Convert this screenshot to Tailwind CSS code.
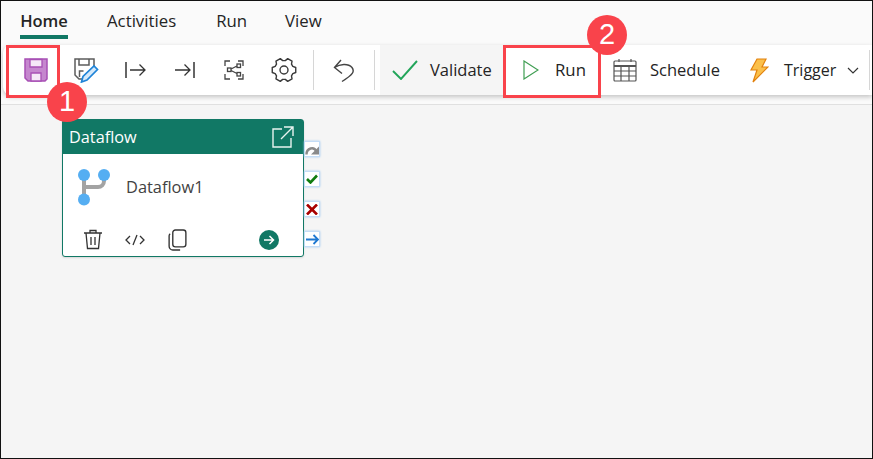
<!DOCTYPE html>
<html>
<head>
<meta charset="utf-8">
<script src="https://cdn.jsdelivr.net/npm/@tailwindcss/browser@4"></script>
</head>
<body class="m-0">
<div class="relative w-[873px] h-[459px] overflow-hidden bg-[#f5f5f5] font-['Open_Sans','Noto_Sans',sans-serif] text-[#242424] border border-[#111111]">
  <!-- top area -->
  <div class="h-[103px] bg-[#fafafa] border-b border-[#e0e0e0] box-content">
    <nav class="flex h-[44px] pl-[19px] text-[16.8px] leading-[22px]">
      <a class="relative w-[48px] pt-[9px] text-[16.5px] font-semibold text-[#242424] text-center whitespace-nowrap">Home<span class="absolute left-0 right-0 top-[34px] h-[4px] bg-[#117865]"></span></a>
      <a class="ml-[39px] pt-[9px]">Activities</a>
      <a class="ml-[40px] pt-[9px]">Run</a>
      <a class="ml-[38px] pt-[9px]">View</a>
    </nav>
    <div class="flex items-stretch h-[50px] ml-[2px] bg-white rounded-l-[8px] shadow-[0_2px_5px_rgba(0,0,0,0.22)] text-[16.5px]">
      <div class="flex items-center w-[377px] shrink-0">
        <span class="w-[58px] flex justify-center pl-[7px]">
          <svg width="24" height="24" viewBox="0 0 24 24"><path d="M1 1h22v20l-2 2H4l-3-3z" fill="#c587ce" stroke="#a850b5" stroke-width="1.500"/><path d="M6 1.500h12v7.500H6z" fill="#f5e8f7" stroke="#a850b5" stroke-width="1.300"/><path d="M7 15h10v8H7z" fill="#f5e8f7" stroke="#a850b5" stroke-width="1.300"/></svg>
        </span>
        <span class="w-[50px] flex justify-center">
          <svg width="26" height="26" viewBox="0 0 26 26" fill="none"><path d="M9 22l-3 0-4-4V2h19v7M6 2v6h10V2M6.500 20v-6h4" stroke="#5c5c5c" stroke-width="1.500"/><path d="M8.500 25l1.500-5.500L21 9l3.500 3.500L14 23z" fill="#d5e9fa" stroke="#1f84d8" stroke-width="1.700"/></svg>
        </span>
        <span class="w-[48px] flex justify-center">
          <svg width="21" height="16" viewBox="0 0 21 16" fill="none" stroke="#333" stroke-width="1.300"><path d="M1 0v16" stroke="#666" stroke-width="2"/><path d="M5 8h15M14.500 2.500 20 8l-5.500 5.500"/></svg>
        </span>
        <span class="w-[51px] flex justify-center">
          <svg width="21" height="16" viewBox="0 0 21 16" fill="none" stroke="#333" stroke-width="1.300"><path d="M20 0v16" stroke="#666" stroke-width="2"/><path d="M1 8h15M10.500 2.500 16 8l-5.500 5.500"/></svg>
        </span>
        <span class="w-[47px] flex justify-center">
          <svg width="20" height="20" viewBox="0 0 20 20" fill="none" stroke="#444" stroke-width="1.300"><path d="M1 6V1h5M14 1h5v5M19 14v5h-5M6 19H1v-5"/><rect x="13" y="4" width="3.500" height="3.500"/><rect x="13" y="12.500" width="3.500" height="3.500"/><rect x="3.500" y="8" width="3.500" height="3.500"/><path d="M7 9l6-3M7 10.500l6 3"/></svg>
        </span>
        <span class="w-[53px] flex justify-center">
          <svg width="26" height="26" viewBox="0 0 26 26" fill="none" stroke="#3a3a3a" stroke-width="1.400" stroke-linejoin="round"><path d="M21.810 9.440 24.740 10.510 24.740 15.490 21.810 16.560 20.490 18.850 21.030 21.920 16.710 24.410 14.320 22.410 11.680 22.410 9.290 24.410 4.970 21.920 5.510 18.850 4.190 16.560 1.260 15.490 1.260 10.510 4.190 9.440 5.510 7.150 4.970 4.080 9.290 1.590 11.680 3.590 14.320 3.590 16.710 1.590 21.030 4.080 20.490 7.150Z"/><circle cx="13" cy="13" r="4"/></svg>
        </span>
        <span class="w-px h-[40px] bg-[#d6d6d6] ml-[3px]"></span>
        <span class="w-[60px] flex justify-center">
          <svg width="22" height="25" viewBox="0 0 22 25" fill="none" stroke="#444" stroke-width="1.400"><path d="M8 2 1.500 9.500 9 15.500M1.500 9.500C7 6 15 5 19 9.500c3 4 1 7-10 14"/></svg>
        </span>
        <span class="w-px h-[40px] bg-[#d6d6d6]"></span>
      </div>
      <div class="flex items-center w-[123px] shrink-0 bg-[#f5f5f5] pl-[12px]">
        <svg width="26" height="20" viewBox="0 0 26 20" fill="none" stroke="#22a55a" stroke-width="1.900"><path d="M1 11l8 8L25 1"/></svg>
        <span class="ml-[12px]">Validate</span>
      </div>
      <div class="flex items-center w-[97px] shrink-0 pl-[20px]">
        <svg width="16" height="20" viewBox="0 0 16 20" fill="none" stroke="#3f9e52" stroke-width="1.200"><path d="M1 1l14 9-14 9z"/></svg>
        <span class="ml-[16px] text-[16.8px]">Run</span>
      </div>
      <div class="flex items-center shrink-0 pl-[13px] w-[130px]">
        <svg width="24" height="24" viewBox="0 0 24 24" fill="none" stroke="#555" stroke-width="1.200"><rect x="1" y="3" width="22" height="20" rx="1"/><path d="M1 8h22" stroke-width="2"/><path d="M1 13h22M1 18h22M8 8v15M16 8v15M6 1v3M18 1v3"/></svg>
        <span class="ml-[13px]">Schedule</span>
      </div>
      <div class="flex items-center shrink-0 pl-[19px]">
        <svg width="20" height="25" viewBox="0 0 20 25" fill="#fbc04a" stroke="#e2820f" stroke-width="1.200"><path d="M8 1h9l-4 8h6L4 24l4-12H2z"/></svg>
        <span class="ml-[15px] text-[16px]">Trigger</span>
        <svg class="ml-[11px]" width="12" height="7" viewBox="0 0 12 7" fill="none" stroke="#333" stroke-width="1.200"><path d="M1 1l5 5 5-5"/></svg>
        <span class="w-px h-[40px] bg-[#d6d6d6] ml-[10px]"></span>
      </div>
    </div>
  </div>

  <!-- activity node on the canvas -->
  <div class="absolute left-[61px] top-[118px] w-[242px] h-[138px] bg-white rounded-[3px] border border-[#117865] flex flex-col shadow-[0_1px_2px_rgba(0,0,0,0.12)]">
    <div class="h-[34px] bg-[#117865] flex items-center justify-between pl-[6px] pr-[9px] text-white text-[16.3px]">
      <span class="pt-[1px]">Dataflow</span>
      <svg width="22" height="22" viewBox="0 0 22 22" fill="none" stroke="#e8f3f0" stroke-width="1.400"><path d="M10 3H1v18h18v-9M12 1h9v9M21 1 9 13"/></svg>
    </div>
    <div class="flex items-center h-[66px] pl-[15px]">
      <svg width="33" height="37" viewBox="0 0 33 37" fill="none"><path d="M6 6v24M6 18h14a6 6 0 0 0 6-6V6" stroke="#a3a3a3" stroke-width="4"/><circle cx="6" cy="6" r="6" fill="#55aef2"/><circle cx="26" cy="6" r="6" fill="#55aef2"/><circle cx="6" cy="30.500" r="6" fill="#55aef2"/></svg>
      <span class="ml-[15px] text-[16.4px] text-[#424242]">Dataflow1</span>
    </div>
    <div class="flex items-center flex-1 pl-[20px] pr-[24px] pt-[3px]">
      <svg width="20" height="21" viewBox="0 0 20 21" fill="none" stroke="#333" stroke-width="1.300"><path d="M1 4h18M7 4V1.500h6V4M3 4l1.500 15.500h11L17 4M8 8v8M12 8v8"/></svg>
      <svg class="ml-[22px]" width="20" height="12" viewBox="0 0 20 12" fill="none" stroke="#333" stroke-width="1.300"><path d="M5 2 1 6l4 4M15 2l4 4-4 4M12 1 8 11"/></svg>
      <svg class="ml-[23px]" width="19" height="22" viewBox="0 0 18 21" fill="none" stroke="#333" stroke-width="1.300"><rect x="4.500" y="1" width="12.500" height="16" rx="2.500"/><path d="M2 4.500A2.500 2.500 0 0 0 1 6.500v10a3.500 3.500 0 0 0 3.500 3.500h7"/></svg>
      <svg class="ml-auto" width="20" height="20" viewBox="0 0 20 20" fill="none"><circle cx="10" cy="10" r="10" fill="#117865"/><path d="M5 10h9M10.500 6l4 4-4 4" stroke="#fff" stroke-width="1.500"/></svg>
    </div>
  </div>

  <!-- output ports -->
  <div class="absolute left-[303px] top-[140px] flex flex-col gap-[14px]">
    <span class="w-[16px] h-[16px] bg-white border border-[#c4ddf7] shadow-[0_0_2px_#9fc8f0] flex items-center justify-center">
      <svg width="14" height="11" viewBox="0 0 14 11" fill="none"><path d="M1.500 10.500C1.500 4 9 2 11.500 7.500" stroke="#8a8a8a" stroke-width="2.400"/><path d="M14 2.500v8H6z" fill="#8a8a8a"/></svg>
    </span>
    <span class="w-[16px] h-[16px] bg-white border border-[#c4ddf7] shadow-[0_0_2px_#9fc8f0] flex items-center justify-center">
      <svg width="12" height="10" viewBox="0 0 12 10" fill="none" stroke="#107c10" stroke-width="2.600"><path d="M1 5l3.500 3.500L11 1.500"/></svg>
    </span>
    <span class="w-[16px] h-[16px] bg-white border border-[#c4ddf7] shadow-[0_0_2px_#9fc8f0] flex items-center justify-center">
      <svg width="12" height="11" viewBox="0 0 12 11" fill="none" stroke="#a80000" stroke-width="2.600"><path d="M1 .5l10 10M11 .5l-10 10"/></svg>
    </span>
    <span class="w-[16px] h-[16px] bg-white border border-[#c4ddf7] shadow-[0_0_2px_#9fc8f0] flex items-center justify-center">
      <svg width="13" height="11" viewBox="0 0 13 11" fill="none" stroke="#1f78d1" stroke-width="1.800"><path d="M0 5.500h12M7.500 1l4.500 4.500L7.500 10"/></svg>
    </span>
  </div>

  <!-- annotations -->
  <div class="absolute left-[5px] top-[44px] w-[54px] h-[53px] border-[3px] border-[#f9434b]"></div>
  <div class="absolute left-[502px] top-[44px] w-[98px] h-[53px] border-[3px] border-[#f9434b]"></div>
  <div class="absolute left-[46px] top-[81px] w-[40px] h-[40px] rounded-full bg-[#f9434b] text-white text-[29px] font-['Liberation_Sans',sans-serif] flex items-center justify-center">1</div>
  <div class="absolute left-[586px] top-[14px] w-[40px] h-[40px] rounded-full bg-[#f9434b] text-white text-[29px] font-['Liberation_Sans',sans-serif] flex items-center justify-center">2</div>
</div>
</body>
</html>
